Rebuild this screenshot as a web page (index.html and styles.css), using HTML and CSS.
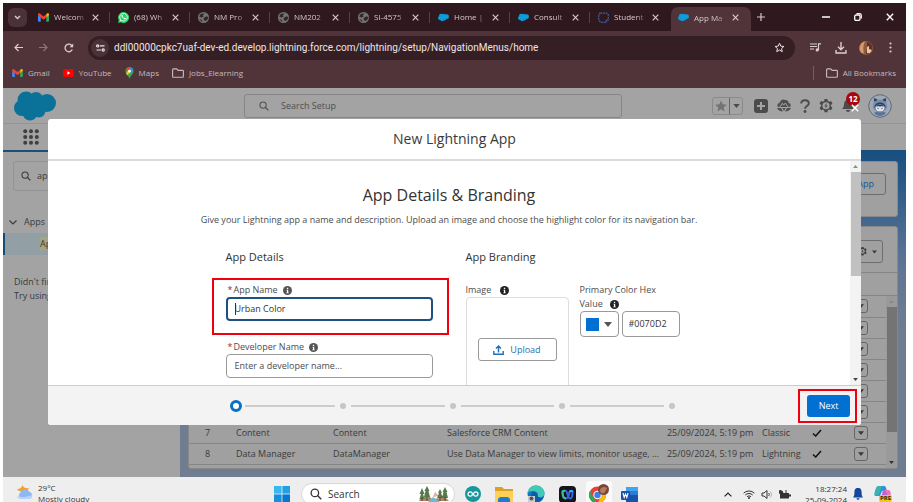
FILE: index.html
```html
<!DOCTYPE html>
<html lang="en">
<head>
<meta charset="utf-8">
<title>App Manager</title>
<link rel="stylesheet" href="styles.css">
</head>
<body>
<svg class="sprite" aria-hidden="true">
  <symbol id="gmail" viewBox="0 0 24 18"><path d="M0 3v13a2 2 0 0 0 2 2h4V8z" fill="#4285f4"/><path d="M24 3v13a2 2 0 0 1-2 2h-4V8z" fill="#34a853"/><path d="M18 2v7l6-5V3c0-3-3-4-5-2z" fill="#fbbc04"/><path d="M0 3v1l6 5 6 5 6-5V2l-6 5-6-5L5 1C3-1 0 0 0 3z" fill="#ea4335"/></symbol>
  <symbol id="globe" viewBox="0 0 16 16"><circle cx="8" cy="8" r="8" fill="#737373"/><path d="M3 4c2-2 5-2 6-1l-2 2 1 2-3 1-3-1zM9 8l4-2 2 2-2 4-3 1-2-3z" fill="#33262a"/><path d="M2 10l4 2v2l-3-2z" fill="#33262a"/></symbol>
  <symbol id="cloud" viewBox="0 0 42 30"><circle cx="12" cy="9" r="8.5"/><circle cx="22" cy="8" r="7"/><circle cx="33" cy="12" r="9"/><circle cx="8" cy="17" r="8"/><circle cx="16" cy="22" r="7.5"/><circle cx="25" cy="20" r="6.5"/><path d="M8 8h24v12H8z"/></symbol>
  <symbol id="x" viewBox="0 0 10 10"><path d="M1 1l8 8M9 1L1 9" fill="none" stroke="currentColor" stroke-width="1.7"/></symbol>
  <symbol id="folder" viewBox="0 0 16 13"><path d="M1.8 1h4.5l1.8 2h6.100a1 1 0 0 1 1 1v7.200a1 1 0 0 1-1 1H1.800a1 1 0 0 1-1-1V2a1 1 0 0 1 1-1z" fill="none" stroke="currentColor" stroke-width="1.500"/></symbol>
  <symbol id="lens" viewBox="0 0 16 16"><circle cx="6.500" cy="6.500" r="5" fill="none" stroke="currentColor" stroke-width="1.700"/><path d="M10 10l5 5" stroke="currentColor" stroke-width="1.900"/></symbol>
  <symbol id="gear" viewBox="0 0 16 16"><path fill-rule="evenodd" d="M6.300 0h3.400l.4 2.300 1.400.8 2.200-.8 1.700 2.900-1.800 1.600v1.600l1.800 1.600-1.700 2.900-2.200-.8-1.400.8-.4 2.300H6.300l-.4-2.300-1.400-.8-2.200.8L.6 10l1.800-1.600V6.800L.6 5.200l1.700-2.900 2.200.8 1.400-.8zM8 3.600a4 4 0 1 0 0 8.200 4 4 0 0 0 0-8.200z" fill="currentColor"/><path d="M8.800 4.500L6 8.200h1.800L7.200 11 10 7.300H8.200z" fill="currentColor"/></symbol>
  <symbol id="info" viewBox="0 0 10 10"><circle cx="5" cy="5" r="5" fill="currentColor"/><path d="M4.300 2h1.500v1.300H4.300zM3.900 4.200h1.900v3h.6V8H3.700v-.8h.7V5h-.5z" fill="#fff"/></symbol>
  <symbol id="down" viewBox="0 0 8 5"><path d="M0 0h8L4 5z" fill="currentColor"/></symbol>
  <symbol id="tick" viewBox="0 0 10 8"><path d="M1 4.500l2.700 2.500L9 1" fill="none" stroke="currentColor" stroke-width="1.500"/></symbol>
</svg>
<div class="screen">
  <div class="tabs">
    <button class="tab-search" aria-label="Search tabs"><svg width="7" height="5" viewBox="0 0 7 5"><path d="M1 1l2.500 2.500L6 1" fill="none" stroke="currentColor" stroke-width="1.500"/></svg></button>
    <div class="tab"><svg class="fav"><use href="#gmail"/></svg><span>Welcom</span><button aria-label="Close"><svg><use href="#x"/></svg></button></div>
    <div class="tab"><svg class="fav" viewBox="0 0 16 16"><path d="M0 16l1.200-4A8 8 0 1 1 4.200 15z" fill="#25d366"/><path d="M3 13l.6-2.200a5.500 5.500 0 1 1 2 1.700z" fill="none" stroke="#fff" stroke-width="1.200"/><path d="M5.800 4.500c-1 .8-.6 2.500 1.200 4.300s3.600 2.300 4.300 1.200l.1-1-1.600-.8-.9.9c-1-.4-1.700-1.200-2.100-2.100l.7-.9-.7-1.600z" fill="#fff"/></svg><span>(68) Wh</span><button aria-label="Close"><svg><use href="#x"/></svg></button></div>
    <div class="tab"><svg class="fav"><use href="#globe"/></svg><span>NM Pro</span><button aria-label="Close"><svg><use href="#x"/></svg></button></div>
    <div class="tab"><svg class="fav"><use href="#globe"/></svg><span>NM202</span><button aria-label="Close"><svg><use href="#x"/></svg></button></div>
    <div class="tab"><svg class="fav"><use href="#globe"/></svg><span>SI-4575</span><button aria-label="Close"><svg><use href="#x"/></svg></button></div>
    <div class="tab"><svg class="fav sf"><use href="#cloud"/></svg><span>Home |</span><button aria-label="Close"><svg><use href="#x"/></svg></button></div>
    <div class="tab"><svg class="fav sf"><use href="#cloud"/></svg><span>Consult</span><button aria-label="Close"><svg><use href="#x"/></svg></button></div>
    <div class="tab last"><svg class="fav" viewBox="0 0 16 16"><path d="M3 1.500h10L15 4v7.500h-3V15H4l-3-3V4z" fill="none" stroke="#3e5c94" stroke-width="1.800" stroke-dasharray="3 1"/></svg><span>Student</span><button aria-label="Close"><svg><use href="#x"/></svg></button></div>
    <div class="tab active"><svg class="fav sf"><use href="#cloud"/></svg><span>App Ma</span><button aria-label="Close"><svg><use href="#x"/></svg></button></div>
    <button class="new-tab" aria-label="New tab"><svg width="8" height="8" viewBox="0 0 8 8"><path d="M4 0v8M0 4h8" stroke="currentColor" stroke-width="1.200"/></svg></button>
    <div class="window-buttons">
      <button aria-label="Minimise"><svg width="8" height="8" viewBox="0 0 8 8"><path d="M0 4h8" stroke="currentColor" stroke-width="1.500"/></svg></button>
      <button aria-label="Restore"><svg width="8" height="8" viewBox="0 0 8 8"><rect x=".7" y="2" width="5.300" height="5.300" rx="1.300" fill="none" stroke="currentColor" stroke-width="1.300"/><path d="M2.500.7h3A1.800 1.800 0 0 1 7.300 2.500v3" fill="none" stroke="currentColor" stroke-width="1.200"/></svg></button>
      <button aria-label="Close window"><svg width="8" height="8"><use href="#x"/></svg></button>
    </div>
  </div>
  <div class="toolbar">
    <div class="address-row">
      <button aria-label="Back"><svg width="9" height="9" viewBox="0 0 9 9"><path d="M9 4.500H1M4.500 1L1 4.500 4.500 8" fill="none" stroke="currentColor" stroke-width="1.200"/></svg></button>
      <button class="dim" aria-label="Forward"><svg width="9" height="9" viewBox="0 0 9 9"><path d="M0 4.500h8M4.500 1L8 4.500 4.500 8" fill="none" stroke="currentColor" stroke-width="1.200"/></svg></button>
      <button aria-label="Reload"><svg width="10" height="10" viewBox="0 0 10 10"><path d="M8.300 6.500A3.800 3.800 0 1 1 8 2.800" fill="none" stroke="currentColor" stroke-width="1.300"/><path d="M9.200.6v3.600H5.600z" fill="currentColor"/></svg></button>
      <div class="address">
        <span class="tune"><svg width="9" height="8" viewBox="0 0 9 8"><g fill="none" stroke="currentColor" stroke-width="1.200"><circle cx="1.700" cy="1.900" r="1.100"/><path d="M4 1.900h4.500M.5 6H5"/><circle cx="7.200" cy="6" r="1.100"/></g></svg></span>
        <input type="text" aria-label="Address" value="ddl00000cpkc7uaf-dev-ed.develop.lightning.force.com/lightning/setup/NavigationMenus/home">
        <button aria-label="Bookmark"><svg width="11" height="11" viewBox="0 0 22 22"><path d="M11 2.500l2.600 5.800 6.200.6-4.700 4.200 1.400 6.200-5.500-3.300-5.500 3.300 1.400-6.200-4.700-4.200 6.200-.6z" fill="none" stroke="currentColor" stroke-width="2"/></svg></button>
      </div>
      <div class="browser-actions">
        <button aria-label="Media"><svg width="11" height="9" viewBox="0 0 11 9"><path d="M0 1h7M0 3.500h7M0 6h4M8.500 7V.8H11" fill="none" stroke="currentColor" stroke-width="1.200"/><circle cx="7.200" cy="6.900" r="1.600" fill="currentColor"/></svg></button>
        <button aria-label="Downloads"><svg width="12" height="12" viewBox="0 0 12 12"><path d="M6 0v7.500M3 4.700l3 3 3-3M1 8v3h10V8" fill="none" stroke="currentColor" stroke-width="1.400"/></svg></button>
        <button aria-label="Profile"><svg width="14" height="14" viewBox="0 0 14 14"><circle cx="7" cy="7" r="7" fill="#8f5a3d"/><path d="M5 .5c-4 2-6 7-3 11l3 1c-1-4-1-8 1-12z" fill="#d49a6e"/><path d="M8 1c4 0 6 4 5 8l-2 3-4 1 1-5z" fill="#5a3324"/><path d="M8 6l2-1v3l3 1-2 3H8z" fill="#e6c4a4"/></svg></button>
        <button aria-label="Menu"><svg width="3" height="11" viewBox="0 0 3 11"><g fill="currentColor"><circle cx="1.500" cy="1.500" r="1.100"/><circle cx="1.500" cy="5.500" r="1.100"/><circle cx="1.500" cy="9.500" r="1.100"/></g></svg></button>
      </div>
    </div>
    <div class="bookmarks">
      <a href="#"><svg width="11" height="8"><use href="#gmail"/></svg>Gmail</a>
      <a href="#"><svg width="11" height="8" viewBox="0 0 11 8"><rect width="11" height="8" rx="2.200" fill="#f00"/><path d="M4.400 2.300v3.400L7.300 4z" fill="#fff"/></svg>YouTube</a>
      <a href="#"><svg width="9" height="12" viewBox="0 0 9 12"><path d="M4.500 12C4 9 .5 7 .5 4.200a4 4 0 0 1 8 0C8.500 7 5 9 4.500 12z" fill="#34a853"/><path d="M1 2.500A4 4 0 0 1 5.500.3L2.600 5z" fill="#ea4335"/><path d="M5.500.3a4 4 0 0 1 2.800 2.500L4 7 2.600 5z" fill="#4285f4"/><path d="M1 6.300L3.500 3l2 2-3.200 3.600z" fill="#fbbc04"/><circle cx="4.500" cy="4.200" r="1.400" fill="#fff"/></svg>Maps</a>
      <a href="#"><svg width="12" height="10"><use href="#folder"/></svg>Jobs_Elearning</a>
      <a href="#" class="all"><svg width="12" height="10"><use href="#folder"/></svg>All Bookmarks</a>
    </div>
  </div>

  <div class="page">
    <header class="sf-header">
      <svg class="logo"><use href="#cloud"/></svg>
      <label class="setup-search"><svg width="10" height="10"><use href="#lens"/></svg><input type="search" aria-label="Search Setup" placeholder="Search Setup"></label>
      <div class="sf-actions">
        <div class="favourites">
          <button aria-label="Favourite"><svg width="12" height="12" viewBox="0 0 22 22"><path d="M11 1l3 7 7.500.6-5.700 5 1.800 7.400-6.600-4-6.600 4 1.800-7.400-5.700-5L8 8z" fill="#737373"/></svg></button>
          <button aria-label="Favourites list"><svg width="7" height="4"><use href="#down"/></svg></button>
        </div>
        <button aria-label="Add"><svg width="14" height="14" viewBox="0 0 14 14"><rect width="14" height="14" rx="3" fill="#4b4b4b"/><path d="M7 3v8M3 7h8" stroke="#a3a3a3" stroke-width="2"/></svg></button>
        <button aria-label="Guidance"><svg width="14" height="13" viewBox="0 0 14 13"><path d="M1 8C-.3 6.500.8 4 2.800 3.700 3.500 1 6 0 8 1c2-.3 3.600 1 3.600 3 2 .4 2.800 2.500 1.400 4z" fill="#4f4f4f"/><path d="M2.800 8L5.300 4.200l1.400 2L8.300 4l2.900 4" fill="none" stroke="#a3a3a3"/><path d="M0 9h4l2 3.500C3 12.500 1 11 0 9zM14 9h-4l-2 3.500c3 0 5-1.500 6-3.500zM5.300 9h3.400L7 12z" fill="#4f4f4f"/></svg></button>
        <button aria-label="Help"><svg width="10" height="14" viewBox="0 0 10 14"><path d="M1.200 4.500C1.200 2.300 2.700 1.200 5 1.200s3.800 1.200 3.800 3.200C8.800 7 5 7 5 9.800" fill="none" stroke="#4b4b4b" stroke-width="1.900"/><circle cx="5" cy="12.500" r="1.400" fill="#4b4b4b"/></svg></button>
        <button aria-label="Setup"><svg width="14" height="14"><use href="#gear"/></svg></button>
        <button class="bell" aria-label="Notifications"><svg width="12" height="12" viewBox="0 0 12 12"><path d="M6 0c3 0 4 2 4 4.500S11 8 12 9H0c1-1 2-2 2-4.500S3 0 6 0zM4 10h4c0 2.500-4 2.500-4 0z" fill="#4b4b4b"/></svg><b>12</b></button>
        <button class="avatar" aria-label="View profile"><svg width="24" height="24" viewBox="0 0 24 24"><circle cx="12" cy="12" r="11.300" fill="#a0a8b2" stroke="#5b6a82"/><path d="M6 19c2-2 10-2 12 0-3 4-9 4-12 0z" fill="#5c7697"/><path d="M6 4l3.500 1.500h5L18 4l.6 5c2 6-2 9.500-6.600 9.500S3.400 15 5.400 9z" fill="#7a8eab"/><path d="M6 4l3 1.300-.5 2H6zM18 4l-3 1.300.5 2H18z" fill="#2c4468"/><ellipse cx="12" cy="13" rx="5.500" ry="4.500" fill="#283f66"/><ellipse cx="12" cy="14" rx="4.700" ry="3.400" fill="#dde0e4"/><path d="M7.500 12.200c1-2 8-2 9 0l-2 .3-1-.6-1.500.9-1.500-.9-1 .6z" fill="#283f66"/><circle cx="10" cy="14.300" r=".6" fill="#283f66"/><circle cx="14" cy="14.300" r=".6" fill="#283f66"/></svg></button>
      </div>
    </header>
    <nav class="sf-nav"><button aria-label="App Launcher"><svg width="16" height="16" viewBox="0 0 16 16"><g fill="#3f3f3f"><circle cx="2.200" cy="2.200" r="2"/><circle cx="8" cy="2.200" r="2"/><circle cx="13.800" cy="2.200" r="2"/><circle cx="2.200" cy="8" r="2"/><circle cx="8" cy="8" r="2"/><circle cx="13.800" cy="8" r="2"/><circle cx="2.200" cy="13.800" r="2"/><circle cx="8" cy="13.800" r="2"/><circle cx="13.800" cy="13.800" r="2"/></g></svg></button></nav>
    <div class="workspace">
      <aside class="sidebar">
        <label class="quick-find"><svg width="10" height="10"><use href="#lens"/></svg><input type="text" aria-label="Quick Find" value="app"></label>
        <button class="tree"><svg width="8" height="5" viewBox="0 0 8 5"><path d="M.5.500L4 4 7.500.500" fill="none" stroke="currentColor" stroke-width="1.200"/></svg>Apps</button>
        <a class="tree-item" href="#"><mark>App</mark></a>
        <p>Didn't find<br>Try using</p>
      </aside>
      <main>
        <section class="card title-card"><button>New Lightning App</button></section>
        <section class="card list-card">
          <div class="list-tools"><button aria-label="List settings"><svg width="9" height="9"><use href="#gear"/></svg><svg width="5" height="4"><use href="#down"/></svg></button></div>
          <div class="list-head"></div>
          <div class="list-scroll">
            <table>
              <colgroup><col class="c-num"><col class="c-name"><col class="c-dev"><col class="c-desc"><col class="c-date"><col class="c-type"><col class="c-vis"><col class="c-menu"></colgroup>
              <tbody>
                <tr><td colspan="7"></td><td><button aria-label="Row actions"><svg><use href="#down"/></svg></button></td></tr>
                <tr><td colspan="7"></td><td><button aria-label="Row actions"><svg><use href="#down"/></svg></button></td></tr>
                <tr><td colspan="7"></td><td><button aria-label="Row actions"><svg><use href="#down"/></svg></button></td></tr>
                <tr><td colspan="7"></td><td><button aria-label="Row actions"><svg><use href="#down"/></svg></button></td></tr>
                <tr><td colspan="7"></td><td><button aria-label="Row actions"><svg><use href="#down"/></svg></button></td></tr>
                <tr><td colspan="7"></td><td><button aria-label="Row actions"><svg><use href="#down"/></svg></button></td></tr>
                <tr><td>7</td><td>Content</td><td>Content</td><td>Salesforce CRM Content</td><td>25/09/2024, 5:19 pm</td><td>Classic</td><td><svg class="tick"><use href="#tick"/></svg></td><td><button aria-label="Row actions"><svg><use href="#down"/></svg></button></td></tr>
                <tr><td>8</td><td>Data Manager</td><td>DataManager</td><td>Use Data Manager to view limits, monitor usage, ...</td><td>25/09/2024, 5:19 pm</td><td>Lightning</td><td><svg class="tick"><use href="#tick"/></svg></td><td><button aria-label="Row actions"><svg><use href="#down"/></svg></button></td></tr>
                <tr><td colspan="7"></td><td><button aria-label="Row actions"><svg><use href="#down"/></svg></button></td></tr>
              </tbody>
            </table>
            <div class="scrollbar dark"><svg class="up"><use href="#down"/></svg><i></i><svg><use href="#down"/></svg></div>
          </div>
        </section>
      </main>
    </div>

    <div class="modal" role="dialog" aria-labelledby="dialog-title">
      <button class="modal-close" aria-label="Close"><svg width="8" height="8"><use href="#x"/></svg></button>
      <div class="modal-header"><h2 id="dialog-title">New Lightning App</h2></div>
      <div class="modal-body">
        <div class="modal-content">
          <h1>App Details &amp; Branding</h1>
          <p class="intro">Give your Lightning app a name and description. Upload an image and choose the highlight color for its navigation bar.</p>
          <div class="columns">
            <section>
              <h3>App Details</h3>
              <div class="field marked">
                <div class="label"><label for="app-name"><em>*</em>App Name</label><svg class="info"><use href="#info"/></svg></div>
                <div class="input focused"><i class="caret"></i><input id="app-name" type="text" value="Urban Color"></div>
              </div>
              <div class="field">
                <div class="label"><label for="dev-name"><em>*</em>Developer Name</label><svg class="info"><use href="#info"/></svg></div>
                <div class="input"><input id="dev-name" type="text" placeholder="Enter a developer name..."></div>
              </div>
            </section>
            <section>
              <h3>App Branding</h3>
              <div class="branding">
                <div class="image">
                  <div class="label image-label"><span>Image</span><svg class="info strong"><use href="#info"/></svg></div>
                  <div class="drop"><button><svg width="11" height="10" viewBox="0 0 11 10"><path d="M5.500 7.500V1M3 3.500L5.500 1 8 3.500M.8 6v3.200h9.400V6" fill="none" stroke="currentColor" stroke-width="1.400"/></svg>Upload</button></div>
                </div>
                <div class="colour">
                  <div class="label"><label for="hex">Primary Color Hex Value <svg class="info strong"><use href="#info"/></svg></label></div>
                  <div class="picker"><button aria-label="Choose colour"><i></i><svg width="8" height="5"><use href="#down"/></svg></button><input id="hex" type="text" value="#0070D2"></div>
                </div>
              </div>
            </section>
          </div>
        </div>
        <div class="scrollbar"><svg class="up"><use href="#down"/></svg><i></i><svg><use href="#down"/></svg></div>
      </div>
      <div class="modal-footer">
        <ol class="steps"><li class="current"></li><li></li><li></li><li></li><li></li></ol>
        <div class="next"><button>Next</button></div>
      </div>
    </div>
  </div>

  <footer class="taskbar">
    <div class="weather">
      <svg width="18" height="18" viewBox="0 0 18 18"><path d="M7 1c-1 3 1 6 6 5-1 3-4 5-7 4S1 8 1 7c3 0 6-2 6-6z" fill="#f0a030"/><path d="M5 17a4 4 0 0 1 0-7 4.500 4.500 0 0 1 8-.5A4 4 0 0 1 14 17z" fill="#8db8f0"/><path d="M5 17c-3 0-4-2-4-3 4 2 10 1 15-1 0 2-1 4-3 4z" fill="#b9d4fa"/></svg>
      <span>29°C<br>Mostly cloudy</span>
    </div>
    <div class="apps">
      <button aria-label="Start"><svg width="16" height="16" viewBox="0 0 16 16"><path d="M0 0h7.600v7.600H0z" fill="#38b8f0"/><path d="M8.400 0H16v7.600H8.400z" fill="#22a0e4"/><path d="M0 8.400h7.600V16H0z" fill="#1690dc"/><path d="M8.400 8.400H16V16H8.400z" fill="#0678d0"/></svg></button>
      <label class="os-search"><svg width="12" height="12"><use href="#lens"/></svg><input type="search" aria-label="Search" placeholder="Search"><svg width="30" height="16" viewBox="0 0 30 16"><path d="M0 15l2-4 8-1 3 3 9-1 4-1 4 4z" fill="#a8866a"/><path d="M9 16l5-5 7 5z" fill="#6fb9ce"/><path d="M14 11l2-5 4 4z" fill="#e8a9a4"/><path d="M3 2L.5 8H2l-1.500 5h5L4 8h1.500zM8 0L5.500 5h1L5 11h6L9.500 5h1zM21 3l-2 4h1l-2 5h6l-2-5h1zM26 1l-2.500 5h1L23 12h6l-1.500-6h1z" fill="#587a4a"/><path d="M3 12v3M8 11v4M21 11v4M26 11v4" stroke="#5d4030"/></svg></label>
      <button aria-label="Arduino"><svg width="16" height="16" viewBox="0 0 16 16"><circle cx="8" cy="8" r="8" fill="#16979c"/><g fill="none" stroke="#fff" stroke-width="1.200"><circle cx="5.200" cy="8" r="2.200"/><circle cx="10.800" cy="8" r="2.200"/></g></svg></button>
      <button aria-label="Files"><svg width="18" height="16" viewBox="0 0 18 16"><path d="M0 1h7l2 2h9v13H0z" fill="#dca122"/><path d="M0 5h18v11H0z" fill="#fbd057"/><path d="M3 16v-3l2-2h8l2 2v3z" fill="#1f7cd0"/></svg></button>
      <button aria-label="Edge"><svg width="18" height="18" viewBox="0 0 18 18"><circle cx="9" cy="9" r="8.500" fill="#1375c8"/><path d="M.6 8C1 3 5 .5 9 .5c5 0 9 4 8.500 8.500-.5 3-4.500 4-7 2.500 1.500-3-1-5.500-4.500-5.500-2.500 0-4.500.8-5.400 2z" fill="#42c9b3"/><path d="M5 7.500c3-1.500 6 .5 5.500 3.800 1 2 4 2.200 6 1.200-1 3-4 5-7.500 5C5.500 17.500 2.500 11 5 7.500z" fill="#0d5cab"/><path d="M1 11h7v7H1z" fill="#c9cdd0"/><circle cx="4.500" cy="13.500" r="2" fill="#50575c"/></svg></button>
      <button aria-label="Webex"><svg width="17" height="17" viewBox="0 0 17 17"><rect width="17" height="17" rx="4" fill="#14151b"/><path d="M6.500 4.800c2 0 2 7.700 4.500 7.700 2 0 2.500-4 2.500-6.500 0-1.600-2.500-1.600-3 .5-.8 3.500-1.500 6-3.500 6C4.500 12.500 3.500 9 3.500 6c0-1 1-1.500 3-1.200z" fill="none" stroke="#3167e8" stroke-width="2"/><path d="M7 12.500C4.500 12.500 3.500 9 3.500 6c0-1 1.500-1.500 2.500-.8" fill="none" stroke="#38c98a" stroke-width="2"/><path d="M10.500 6c.5-1.500 3-1.500 3 0" fill="none" stroke="#31b5e8" stroke-width="2"/></svg></button>
      <button class="running" aria-label="Chrome"><svg width="20" height="20" viewBox="0 0 20 20"><circle cx="8.500" cy="11" r="8.500" fill="#e84235"/><path d="M1 7l5 9 3 3.500A8.500 8.500 0 0 1 1 7z" fill="#31a852"/><path d="M17 11c0 5-4 8.500-8.500 8.500l4-8L9 7h7c.6 1 1 2.500 1 4z" fill="#fbbc04"/><circle cx="8.500" cy="11" r="4.200" fill="#fff"/><circle cx="8.500" cy="11" r="3.200" fill="#3f7fe8"/><circle cx="14.500" cy="5.500" r="5.500" fill="#7b4634"/><path d="M11 6c1-3 5-4 7-1.500-1 1.500-2 4-3.500 5C12 9.500 11 8 11 6z" fill="#b57a60"/></svg></button>
      <button aria-label="Word"><svg width="17" height="15" viewBox="0 0 17 15"><path d="M5 0h12v4H5z" fill="#43a4ee"/><path d="M5 4h12v4H5z" fill="#2b7cd8"/><path d="M5 8h12v7H5z" fill="#1753ad"/><rect y="4" width="9" height="9" rx="1" fill="#1950ad"/><path d="M2 6l1.200 4.500L4.500 7l1.300 3.500L7 6" fill="none" stroke="#fff" stroke-width="1.100"/></svg></button>
    </div>
    <div class="tray">
      <svg class="more" width="8" height="5" viewBox="0 0 8 5"><path d="M.6 4.400L4 1l3.400 3.400" fill="none" stroke="#222" stroke-width="1.200"/></svg>
      <svg width="12" height="9" viewBox="0 0 12 9"><g fill="none" stroke="#333" stroke-width="1"><path d="M.6 3.200a7.700 7.700 0 0 1 10.800 0M2.300 5a5.300 5.300 0 0 1 7.400 0M4 6.700a3 3 0 0 1 4 0"/></g><circle cx="6" cy="8" r="1" fill="#333"/></svg>
      <svg width="12" height="9" viewBox="0 0 12 9"><path d="M1 3h2l3-2.500v8L3 6H1zM7.500 3c1 1 1 2 0 3" fill="none" stroke="#333"/><path d="M9 1.500c2 2 2 4 0 6" fill="none" stroke="#aaa"/></svg>
      <svg width="12" height="9" viewBox="0 0 12 9"><path d="M1 3h9v5.500H1zM10 4.500h2v2h-2z" fill="#333"/><path d="M1 0l3 2L3 4 0 3zM7 0v3" fill="#333" stroke="#333"/></svg>
      <span class="clock">18:27:24<br>25-09-2024</span>
      <svg width="10" height="12" viewBox="0 0 10 12"><path d="M5 0c3 0 3.600 2 3.600 4.500S9 8 10 9.500H0C1 8 1.400 7 1.400 4.500S2 0 5 0zM3.500 10.200h3c0 2-3 2-3 0z" fill="#14479b"/></svg>
      <div class="copilot"><svg width="17" height="16" viewBox="0 0 17 16"><path d="M5 0h5c2 0 2 2 3 5h-5L6 10H2C-1 10 1 6 2 3c.6-2 1-3 3-3z" fill="#2b93dc"/><path d="M5 0C2 0 0 6 1 9c1 1 3 1 4-1l3-8z" fill="#38b4a8"/><path d="M9 4h4c4 0 4 3 3 6-1 4-2 6-5 6H6z" fill="#bd62d8"/><path d="M11 4h3c3 1 3 5 1 8z" fill="#f07aa4"/></svg><b>PRE</b></div>
    </div>
  </footer>
</div>
</body>
</html>
```
FILE: styles.css
```css
*, *::before, *::after { box-sizing: border-box; }

body {
  margin: 0;
  background: #fff;
  color: #3a3a3a;
  font: 9px/14px "Open Sans", "Noto Sans", sans-serif;
}

button, input {
  margin: 0;
  padding: 0;
  border: 0;
  background: none;
  color: inherit;
  font: inherit;
  outline: 0;
}

input { min-width: 0; flex: 1; }
input::placeholder { color: inherit; opacity: 1; }
input[type="search"] { appearance: none; }
button { display: flex; align-items: center; justify-content: center; }
a { color: inherit; text-decoration: none; }
h1, h2, h3, p, ol { margin: 0; padding: 0; font-weight: 400; }
svg { display: block; flex: none; }
.sprite { position: absolute; width: 0; height: 0; }

.screen {
  display: flex;
  flex-direction: column;
  height: calc(100vh - 3px);
  margin: 3px 7px 0 3px;
  overflow: hidden;
}

/* Browser chrome */
.tabs {
  display: flex;
  align-items: center;
  flex: none;
  height: 28px;
  padding-left: 5px;
  background: #2f191f;
  color: #d8c8cc;
  font-size: 8px;
}
.tab-search { width: 19px; height: 19px; margin-right: 4px; border-radius: 6px; background: #4a3238; }
.tab {
  display: flex;
  align-items: center;
  flex: 0 1 80px;
  min-width: 0;
  height: 23px;
  padding: 0 8px 0 7px;
  position: relative;
}
.tab::after { content: ""; position: absolute; right: 1px; top: 6px; height: 11px; border-right: 1px solid #573f46; }
.tab.last::after, .tab.active::after { display: none; }
.fav { width: 11px; height: 11px; margin-right: 5px; }
.fav.sf { fill: #0d9dda; }
.tab span {
  flex: 1;
  white-space: nowrap;
  mask-image: linear-gradient(90deg, #000 65%, transparent);
}
.tab button { width: 15px; height: 17px; }
.tab button svg { width: 7px; height: 7px; }
.tab.active { align-self: flex-end; height: 24px; padding-bottom: 3px; border-radius: 7px 7px 0 0; background: #50343a; }
.new-tab { width: 20px; height: 20px; }
.window-buttons { display: flex; margin-left: auto; color: #fff; }
.window-buttons button { width: 32px; height: 28px; }

.toolbar { flex: none; background: #50343a; color: #dccdd0; }
.address-row { display: flex; align-items: center; height: 33px; padding-left: 3px; }
.address-row > button { width: 25px; height: 24px; }
.dim { color: #8c757a; }
.address {
  display: flex;
  align-items: center;
  flex: 1;
  height: 24px;
  margin-left: 7px;
  padding: 0 10px 0 3px;
  border-radius: 12px;
  background: #351f24;
  font-family: Roboto, "Open Sans", sans-serif;
  font-size: 10px;
  color: #efe4e6;
}
.tune { display: flex; align-items: center; justify-content: center; width: 18px; height: 18px; margin-right: 5px; border-radius: 9px; background: #4a3238; }
.browser-actions { display: flex; align-items: center; padding-left: 8px; padding-right: 3px; }
.browser-actions button { width: 25px; height: 24px; }
.bookmarks { display: flex; gap: 13px; align-items: center; height: 24px; padding: 0 10px 6px 9px; color: #c9b9bd; font-size: 8px; }
.bookmarks a { display: flex; align-items: center; gap: 5px; }
.bookmarks .all { margin-left: auto; padding-left: 12px; border-left: 1px solid #765b61; }

/* Setup page */
.page { flex: 1; min-height: 0; display: flex; flex-direction: column; position: relative; background: #a3a3a3; }
.sf-header { display: flex; align-items: center; flex: none; height: 36px; padding: 0 14px 0 11px; border-bottom: 1px solid #949494; }
.logo { width: 42px; height: 30px; fill: #0a7198; }
.setup-search {
  display: flex;
  align-items: center;
  gap: 12px;
  flex: 0 1 378px;
  height: 24px;
  margin-left: 188px;
  padding: 0 14px;
  border: 1px solid #868686;
  border-radius: 3px;
  color: #4f4f4f;
}
.sf-actions { display: flex; align-items: center; gap: 9px; margin-left: auto; color: #4b4b4b; }
.favourites { display: flex; height: 18px; margin-right: 2px; border: 1px solid #8a8a8a; border-radius: 3px; }
.favourites button { width: 16px; }
.favourites button + button { width: 13px; border-left: 1px solid #666; }
.bell { position: relative; }
.bell b {
  position: absolute;
  left: 4px;
  top: -8px;
  width: 14px;
  height: 14px;
  border-radius: 7px;
  background: #a5090f;
  color: #fff;
  font-size: 8px;
}
.avatar { margin-left: 5px; }
.sf-nav { flex: none; height: 28px; padding: 5px 20px; border-bottom: 2px solid #18507a; }
.workspace { display: flex; flex: 1; min-height: 0; }
.sidebar { flex: 0 0 177px; }
.quick-find {
  display: flex;
  align-items: center;
  gap: 6px;
  height: 30px;
  margin: 9px 8px 0 10px;
  padding: 0 7px;
  border: 1px solid #929292;
  border-radius: 3px;
}
.tree { gap: 7px; height: 22px; margin: 20px 0 0 6px; }
.tree-item { display: block; height: 22px; padding: 4px 0 4px 35px; border-left: 2px solid #174e70; background: #929fa5; }
.tree-item mark { background: #a5a57e; color: inherit; }
.sidebar p { padding: 20px 0 0 11px; }

main {
  display: flex;
  flex-direction: column;
  gap: 9px;
  flex: 1;
  min-width: 0;
  padding: 9px 8px 8px 8px;
  background: linear-gradient(#174f80, #5d7595 110px, #707d91 180px);
}
.card { border: 1px solid #888; border-radius: 3px; background: #a0a0a0; }
.title-card { display: flex; justify-content: flex-end; flex: none; height: 56px; padding: 11px; }
.title-card button { height: 22px; padding: 0 11px; border: 1px solid #6e6e6e; border-radius: 3px; color: #12568c; }
.list-card { display: flex; flex-direction: column; flex: 1; min-height: 0; }
.list-tools { display: flex; justify-content: flex-end; height: 46px; padding: 13px 14px; border-bottom: 1px solid #858585; }
.list-tools button { gap: 5px; height: 23px; width: 32px; border: 1px solid #6e6e6e; border-radius: 3px; }
.list-head { flex: none; height: 23px; border-bottom: 1px solid #858585; }
.list-scroll { display: flex; flex: 1; min-height: 0; overflow: hidden; }
table { flex: 1; width: 100%; table-layout: fixed; border-collapse: collapse; align-self: flex-start; }
tr { height: 21px; border-bottom: 1px solid #858585; }
td { height: 21px; padding: 0; white-space: nowrap; overflow: hidden; }
td:first-child { padding-left: 16px; }
.c-num { width: 47px; }
.c-name { width: 97px; }
.c-dev { width: 114px; }
.c-date { width: 95px; }
.c-type { width: 50px; }
.c-vis { width: 42px; }
.c-menu { width: 32px; }
td button { width: 14px; height: 14px; border: 1px solid #666; border-radius: 3px; }
td button svg { width: 6px; height: 4px; }
.tick { width: 10px; height: 8px; color: #111; }

.scrollbar {
  display: flex;
  flex-direction: column;
  align-items: center;
  flex: none;
  width: 11px;
  padding: 4px 0;
  background: #f3f3f3;
  color: #444;
}
.scrollbar svg { width: 5px; height: 3px; }
.scrollbar .up { transform: rotate(180deg); color: #888; }
.scrollbar i { align-self: stretch; height: 104px; margin: 4px 0 auto 1px; background: #c1c1c1; }
.scrollbar.dark { background: #9a9a9a; color: #333; }
.scrollbar.dark i { height: 125px; background: #747474; }

/* Dialog */
.modal {
  position: absolute;
  inset: 31px 45px 52px 45px;
  display: flex;
  flex-direction: column;
  border-radius: 3px;
  background: #fff;
}
.modal-close { position: absolute; right: 2px; top: -15px; color: #fff; }
.modal-header { flex: none; padding: 10px 0; border-bottom: 2px solid #dcdcdc; text-align: center; }
h2 { font-size: 14px; line-height: 20px; }
.modal-body { display: flex; flex: 1; min-height: 0; overflow: hidden; }
.modal-content { flex: 1; padding-top: 22px; color: #4c4c4c; }
h1 { font-size: 16px; line-height: 24px; color: #333; text-align: center; }
.intro { margin-top: 6px; text-align: center; }
.columns { display: grid; grid-template-columns: 207px 207px; gap: 33px; justify-content: center; margin-top: 22px; }
h3 { margin-bottom: 18px; color: #333; font-size: 11px; line-height: 16px; }
.field { position: relative; margin-bottom: 19px; }
.marked::before { content: ""; position: absolute; inset: -5px -16px -14px -14px; border: 2px solid #f0000e; }
.label { display: flex; align-items: center; gap: 5px; line-height: 14px; }
.image-label { gap: 9px; }
.label em { color: #b02020; font-style: normal; margin: 0 1px 0 2px; }
.info { display: inline-block; width: 9px; height: 9px; color: #555; }
.info.strong { color: #222; }
.label label .info { margin-left: 5px; vertical-align: -2px; }
.input { display: flex; position: relative; height: 24px; padding: 0 8px; border: 1px solid #999; border-radius: 4px; }
.input.focused { border: 2px solid #1d5184; padding: 0 7px; color: #333; }
.caret { position: absolute; left: 7px; top: 4px; height: 12px; border-left: 1px solid #333; }
.branding { display: flex; gap: 11px; }
.image { flex: 0 0 103px; }
.drop { height: 103px; padding: 40px 11px; border: 1px solid #ddd; border-radius: 4px; }
.drop button { gap: 6px; width: 100%; height: 23px; border: 1px solid #999; border-radius: 3px; color: #1c6fb4; }
.colour { flex: 1; }
.colour .label label { width: 85px; }
.picker { display: flex; gap: 3px; }
.picker button { flex: none; gap: 5px; width: 39px; height: 26px; border: 1px solid #999; border-radius: 4px; color: #555; }
.picker i { width: 13px; height: 13px; background: #0070d2; }
.picker input { flex: 0 0 58px; padding: 0 6px; border: 1px solid #999; border-radius: 4px; color: #333; }
.modal-footer {
  display: flex;
  align-items: center;
  flex: none;
  height: 40px;
  padding-right: 4px;
  border-top: 1px solid #ccc;
  border-radius: 0 0 3px 3px;
  background: #f3f3f3;
}
.steps { display: flex; justify-content: space-between; align-items: center; flex: 0 1 445px; margin-left: 182px; list-style: none; }
.steps li { display: flex; align-items: center; flex: 1; }
.steps li:last-child { flex: none; }
.steps li::before { content: ""; width: 6px; height: 6px; border-radius: 50%; background: #c6c6c6; }
.steps li:not(:last-child)::after { content: ""; flex: 1; height: 2px; margin: 0 5px; background: #ccc; }
.steps .current::before { width: 12px; height: 12px; border: 3px solid #0b6fc4; background: #fff; }
.steps li.current:not(:last-child)::after { margin-left: 3px; }
.next { margin-left: auto; padding: 4px 5px 4px 7px; border: 2px solid #f0000e; }
.next button { width: 43px; height: 22px; border-radius: 3px; background: #0070d2; color: #fff; }

/* Taskbar */
.taskbar { display: flex; flex: none; height: 25px; padding: 0 15px 0 13px; background: #eee; color: #333; white-space: nowrap; position: relative; }
.weather { display: flex; gap: 4px; padding-top: 5px; height: 30px; font-size: 8px; line-height: 11px; }
.apps { position: absolute; left: 271px; top: 3px; display: flex; align-items: center; gap: 14px; height: 28px; }
.os-search { display: flex; align-items: center; gap: 6px; width: 154px; height: 22px; margin: 0 -4px 0 -3px; padding: 0 5px 0 8px; border: 1px solid #d8d8d8; border-radius: 11px; background: #fff; font-size: 10px; }
.running { width: 26px; height: 26px; margin: 0 -5px 0 -4px; border-radius: 3px; background: #fafafa; }
.tray { display: flex; align-items: center; gap: 6px; height: 34px; margin-left: auto; }
.more { margin-right: 5px; }
.clock { width: 50px; text-align: right; font-size: 8px; line-height: 11px; }
.copilot { position: relative; margin-left: 5px; }
.copilot b { position: absolute; left: 5px; top: 9px; padding: 0 1px; border-radius: 2px; background: #f5c51c; color: #222; font-size: 6px; line-height: 7px; }
```
